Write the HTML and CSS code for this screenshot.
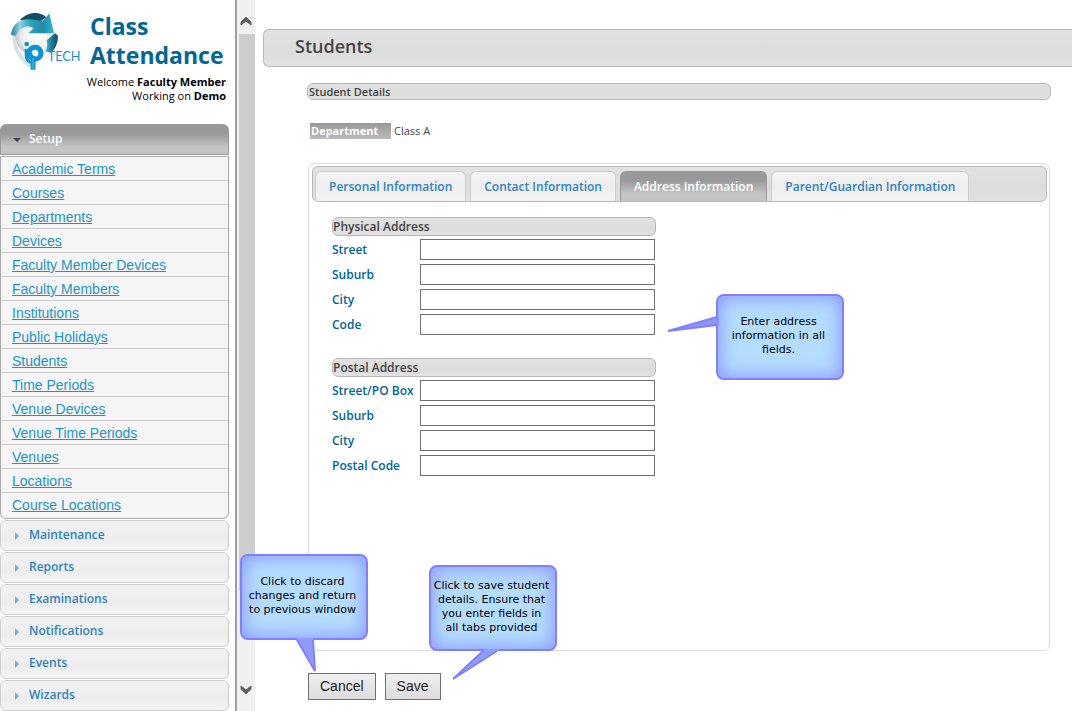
FILE: index.html
```html
<!DOCTYPE html>
<html lang="en">
<head>
<meta charset="utf-8">
<title>Class Attendance - Students</title>
<link rel="stylesheet" href="styles.css">
</head>
<body>
<aside class="sidebar">
  <header class="brand">
    <svg class="logo" viewBox="27 36 216 192" role="img" aria-label="ipTECH">
      <defs>
        <radialGradient id="ball" cx="0.55" cy="0.5" r="0.55"><stop offset="0" stop-color="#fff"/><stop offset="0.7" stop-color="#eceeef"/><stop offset="1" stop-color="#c3c8ca"/></radialGradient>
        <linearGradient id="teal" x1="0" y1="0" x2="1" y2="0"><stop offset="0" stop-color="#1c7c93"/><stop offset="0.2" stop-color="#8fd6e4"/><stop offset="0.45" stop-color="#2fa3bb"/><stop offset="0.75" stop-color="#1d8da8"/><stop offset="1" stop-color="#38b9d3"/></linearGradient>
        <linearGradient id="tealDark" x1="0" y1="0" x2="1" y2="0"><stop offset="0" stop-color="#49b4ca"/><stop offset="0.5" stop-color="#1b7c93"/><stop offset="1" stop-color="#0b4c5f"/></linearGradient>
      </defs>
      <path d="M38 105c-4 35 14 68 48 98l12-8C62 168 46 142 48 106z" fill="#dcdfe1"/>
      <circle cx="105" cy="108" r="59" fill="url(#ball)"/>
      <path d="M60 60C75 44 95 37 115 40c10 2 18 6 24 12l-24 16z" fill="#124f62"/>
      <path d="M33 104C36 82 48 66 66 60c22-5 44 0 62 4l20-24 14 60-77 0 16-15c-20-13-42-4-54 24z" fill="url(#teal)"/>
      <path d="M140 121l25-21 8 6c3 20-8 42-19 53l-17-5c5-12 6-22 3-33z" fill="url(#tealDark)"/>
      <circle cx="80" cy="132" r="7" fill="#0e93cc"/>
      <path d="M74 147h10v16c0 12 4 18 10 22l-4 6c-10-5-16-13-16-26z" fill="#0e93cc"/>
      <circle cx="105" cy="160" r="18" fill="none" stroke="#0e93cc" stroke-width="15"/>
      <path d="M99 158v51" stroke="#0e93cc" stroke-width="15"/>
      <path d="M99 174v32" stroke="#8fd0ea" stroke-width="2"/>
      <circle cx="105" cy="160" r="8" fill="#fff"/>
      <text x="143" y="182" class="logo-text">TECH</text>
    </svg>
    <div class="brand-text">
      <h1>Class Attendance</h1>
      <p>Welcome <b>Faculty Member</b></p>
      <p>Working on <b>Demo</b></p>
    </div>
  </header>
  <nav class="accordion">
    <button class="section open" type="button">Setup</button>
    <ul class="links">
      <li><a href="#">Academic Terms</a></li>
      <li><a href="#">Courses</a></li>
      <li><a href="#">Departments</a></li>
      <li><a href="#">Devices</a></li>
      <li><a href="#">Faculty Member Devices</a></li>
      <li><a href="#">Faculty Members</a></li>
      <li><a href="#">Institutions</a></li>
      <li><a href="#">Public Holidays</a></li>
      <li><a href="#">Students</a></li>
      <li><a href="#">Time Periods</a></li>
      <li><a href="#">Venue Devices</a></li>
      <li><a href="#">Venue Time Periods</a></li>
      <li><a href="#">Venues</a></li>
      <li><a href="#">Locations</a></li>
      <li><a href="#">Course Locations</a></li>
    </ul>
    <button class="section" type="button">Maintenance</button>
    <button class="section" type="button">Reports</button>
    <button class="section" type="button">Examinations</button>
    <button class="section" type="button">Notifications</button>
    <button class="section" type="button">Events</button>
    <button class="section" type="button">Wizards</button>
  </nav>
</aside>
<div class="scrollbar" aria-hidden="true">
  <svg class="arrow" viewBox="0 0 16 34"><path d="M3 25v-3l5-5 5 5v3l-5-4z" fill="#606060" stroke="#606060"/></svg>
  <div class="thumb"></div>
  <div class="track"></div>
  <svg class="arrow" viewBox="0 0 16 34"><path d="M3 9v3l5 5 5-5V9l-5 4z" fill="#606060" stroke="#606060"/></svg>
</div>
<main class="main">
  <h2 class="page-title">Students</h2>
  <div class="content">
    <h3 class="bar details">Student Details</h3>
    <dl class="department"><dt>Department</dt><dd>Class A</dd></dl>
    <section class="panel">
      <div class="tabs" role="tablist">
        <button class="tab" role="tab" type="button">Personal Information</button>
        <button class="tab" role="tab" type="button">Contact Information</button>
        <button class="tab active" role="tab" type="button" aria-selected="true">Address Information</button>
        <button class="tab" role="tab" type="button">Parent/Guardian Information</button>
      </div>
      <form class="form">
        <section class="group">
          <h4 class="bar">Physical Address</h4>
          <label for="street">Street</label><input id="street" type="text">
          <label for="suburb">Suburb</label><input id="suburb" type="text">
          <label for="city">City</label><input id="city" type="text">
          <label for="code">Code</label><input id="code" type="text">
        </section>
        <section class="group">
          <h4 class="bar">Postal Address</h4>
          <label for="pstreet">Street/PO Box</label><input id="pstreet" type="text">
          <label for="psuburb">Suburb</label><input id="psuburb" type="text">
          <label for="pcity">City</label><input id="pcity" type="text">
          <label for="pcode">Postal Code</label><input id="pcode" type="text">
        </section>
      </form>
    </section>
    <div class="actions">
      <button class="action" type="button">Cancel</button>
      <button class="action" type="button">Save</button>
    </div>
  </div>
  <div class="callout callout-fields">
    <svg class="tail" viewBox="0 0 54 20"><path d="M53 4L2 18l51-6z" fill="#8f93ff"/><path d="M51 4L2 18l49-6" fill="none" stroke="#8080ff" stroke-width="2"/></svg>
    Enter address<br>information in all<br>fields.
  </div>
  <div class="callout callout-cancel">
    <svg class="tail" viewBox="0 0 24 38"><path d="M2 1l19 33L19 1z" fill="#8f9bff"/><path d="M3 3l18 31-2-31" fill="none" stroke="#8080ff" stroke-width="2"/></svg>
    Click to discard<br>changes and return<br>to previous window
  </div>
  <div class="callout callout-save">
    <svg class="tail" viewBox="0 0 54 34"><path d="M35 1L3 31 50 1z" fill="#8f9bff"/><path d="M33 3L3 31 47 3" fill="none" stroke="#8080ff" stroke-width="2"/></svg>
    Click to save student<br>details. Ensure that<br>you enter fields in<br>all tabs provided
  </div>
</main>
</body>
</html>
```
FILE: styles.css
```css
* { box-sizing: border-box; margin: 0; padding: 0; }

body {
  display: flex;
  height: 100vh;
  overflow: hidden;
  background: #fff;
  color: #444;
  font: 12px/16px "Open Sans", "Noto Sans", sans-serif;
}

button, input { font: inherit; }
ul { list-style: none; }

/* Sidebar */
.sidebar { flex: 0 0 235px; padding-right: 6px; overflow: hidden; }
.brand { display: flex; height: 124px; padding: 12px 3px 0 9px; }
.logo { flex: none; width: 72px; height: 64px; }
.logo-text { font: 38px "Lato", sans-serif; fill: #0e93cc; }
.brand-text { flex: 1; margin-left: 9px; color: #000; }
.brand-text h1 { font-size: 23px; line-height: 29px; font-weight: 700; color: #069; margin-bottom: 5px; }
.brand-text p { margin-left: -20px; font-size: 11px; line-height: 14px; text-align: right; white-space: nowrap; }

.section {
  position: relative;
  display: block;
  width: 100%;
  height: 31px;
  margin-top: 1px;
  padding: 0 0 1px 28px;
  border: 1px solid #ccc;
  border-radius: 6px;
  background: linear-gradient(#f2f2f2, #eee 50%, #ededed 60%, #f3f3f3);
  color: #2e83bd;
  font-size: 12px;
  font-weight: 600;
  text-align: left;
}
.section::before {
  content: "";
  position: absolute;
  left: 14px;
  top: 11px;
  border: 4px solid transparent;
  border-left-color: #72b0dd;
  border-right-width: 0;
}
.section.open {
  margin: 0;
  border-color: #999;
  border-radius: 6px 6px 0 0;
  background: linear-gradient(#999 30%, #c4c4c4 75%);
  color: #fff;
}
.section.open::before {
  left: 12px;
  top: 13px;
  border: 4px solid transparent;
  border-top-color: #454545;
  border-bottom-width: 0;
}
.links {
  margin-top: 1px;
  padding-bottom: 1px;
  border: 1px solid #aaa;
  border-radius: 0 0 6px 6px;
  background: #f5f5f5;
  font: 14px/24px "Liberation Sans", Arial, sans-serif;
}
.links li { height: 24px; padding-left: 11px; border-bottom: 1px solid #ccc; }
.links li:last-child { border-bottom: 0; }
.links a { color: #1c94c4; }

/* Frame scrollbar */
.scrollbar {
  flex: 0 0 20px;
  display: flex;
  flex-direction: column;
  border-left: 2px solid #a0a0a0;
  background: #f0f0f0;
}
.arrow { flex: none; width: 16px; height: 34px; margin-left: 1px; }
.thumb { flex: 557; margin-left: 2px; background: #cdcdcd; }
.track { flex: 86; }

/* Main area */
.main { position: relative; flex: 1; display: flex; flex-direction: column; padding: 29px 0 11px 8px; }
.page-title {
  padding: 0 0 4px 31px;
  border: 1px solid #b8b8b8;
  border-right: 0;
  border-radius: 6px 0 0 6px;
  background: linear-gradient(#e2e2e2, #dcdcdc 60%, #e2e2e2);
  font-size: 18px;
  line-height: 32px;
  font-weight: 600;
}
.content { flex: 1; display: flex; flex-direction: column; padding: 16px 22px 0 45px; }
.bar {
  border: 1px solid #b8b8b8;
  border-radius: 6px;
  background: linear-gradient(#e2e2e2, #dcdcdc 60%, #e2e2e2);
  font-weight: 600;
}
.details { margin: 0 -1px; padding-left: 1px; font-size: 11px; line-height: 15px; }
.department { display: flex; gap: 3px; margin: 23px 0 24px 2px; font-size: 11px; }
.department dt { width: 81px; padding-left: 1px; background: linear-gradient(#999, #bbb); color: #fff; font-weight: 700; }

.panel { flex: 1; padding: 2px 2px 0 3px; border: 1px solid #ddd; border-radius: 6px; }
.tabs {
  display: flex;
  gap: 4px;
  height: 36px;
  padding: 4px 2px 0;
  border: 1px solid #b8b8b8;
  border-radius: 6px;
  background: linear-gradient(#e2e2e2, #dcdcdc 60%, #e2e2e2);
}
.tab {
  padding: 0 13px;
  border: 1px solid #ccc;
  border-bottom: 0;
  border-radius: 6px 6px 0 0;
  background: linear-gradient(#f3f3f3, #eee 50%, #f3f3f3);
  color: #2e83bd;
  font-weight: 600;
  white-space: nowrap;
}
.tab.active { border-color: #999; background: linear-gradient(#999 30%, #c4c4c4 75%); color: #fff; }

.form { display: grid; gap: 23px; width: 324px; margin: 15px 0 0 20px; }
.group { display: grid; grid-template-columns: 88px 235px; row-gap: 4px; align-items: center; }
.group .bar { grid-column: 1 / -1; margin: 0 -1px -1px 0; line-height: 17px; }
.group label { color: #069; font-weight: 600; white-space: nowrap; }
.group input { width: 100%; height: 21px; padding: 0 3px; border: 1px solid #707070; background: #fff; }

.actions { display: flex; align-items: center; gap: 9px; margin-top: 22px; }
.action {
  padding: 0 11px;
  border: 1px solid #707070;
  background: linear-gradient(#eee, #ddd);
  color: #222;
  font: 14px/25px "Liberation Sans", Arial, sans-serif;
}

/* Help callouts floating over the window */
.callout {
  position: absolute;
  display: grid;
  place-content: center;
  width: 128px;
  height: 86px;
  padding: 0 3px 2px 0;
  border: 2px solid #8080ff;
  border-radius: 8px;
  background: #b5ddff;
  box-shadow: inset 0 0 18px 2px #8b98ff;
  color: #000;
  font: 11px/14px "DejaVu Sans", Verdana, sans-serif;
  text-align: center;
  white-space: nowrap;
}
.tail { position: absolute; }
.callout-fields { left: 461px; top: 294px; }
.callout-fields .tail { left: -52px; top: 17px; width: 54px; height: 20px; }
.callout-cancel { left: -15px; top: 554px; }
.callout-cancel .tail { left: 52px; top: 81px; width: 24px; height: 38px; }
.callout-save { left: 174px; top: 565px; }
.callout-save .tail { left: 19px; top: 81px; width: 54px; height: 34px; }
```
